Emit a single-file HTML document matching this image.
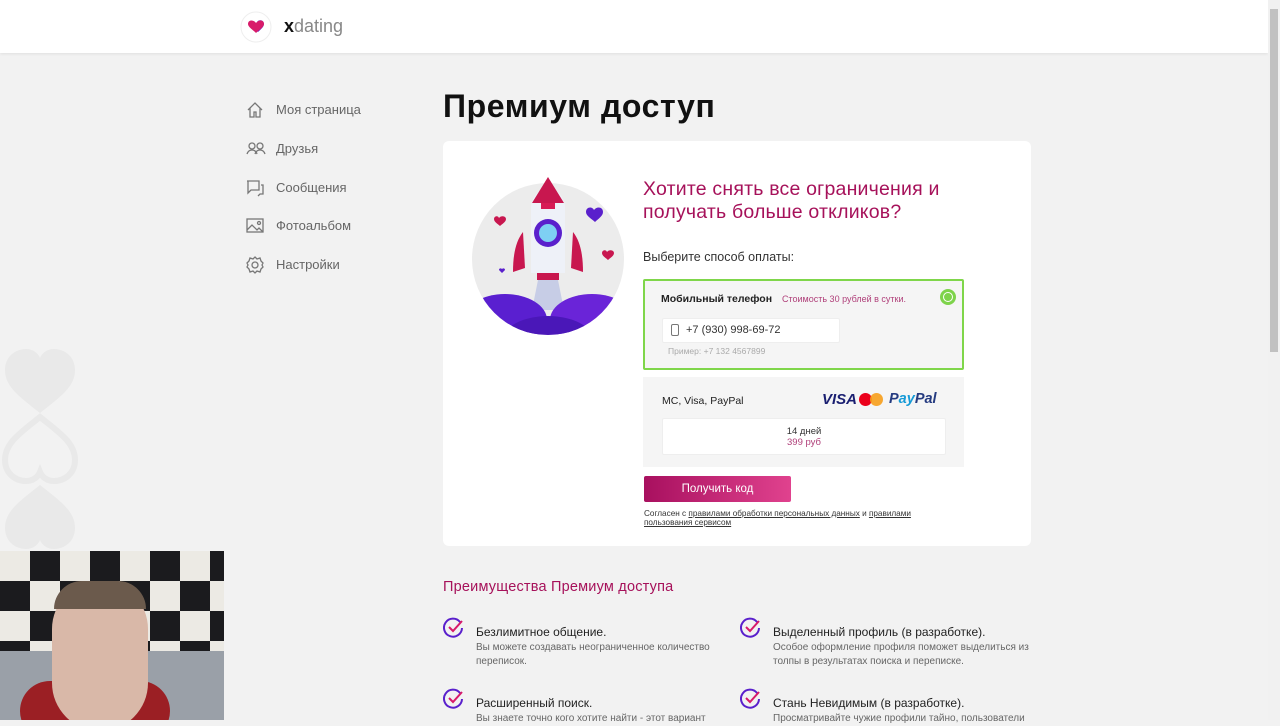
<!DOCTYPE html>
<html><head><meta charset="utf-8"><style>
*{margin:0;padding:0;box-sizing:border-box}
body{width:1280px;height:720px;overflow:hidden;background:#f2f2f2;font-family:"Liberation Sans","DejaVu Sans",sans-serif;position:relative;color:#222}
.abs{position:absolute}
.hdr{left:0;top:0;width:1268px;height:53px;background:#fff;box-shadow:0 1px 3px rgba(0,0,0,.08)}
.nav div{position:absolute;left:276px;font-size:13px;color:#666}
.nav svg{position:absolute;left:-30px;top:-1px}
h1{position:absolute;left:443px;top:88px;font-size:32px;font-weight:bold;color:#111;letter-spacing:0.6px}
.card{left:443px;top:141px;width:588px;height:405px;background:#fff;border-radius:6px}
.ttl{left:643px;top:178px;font-size:19.5px;line-height:23px;color:#a6115a;letter-spacing:0.2px}
.feat{position:absolute;width:270px}
.feat b{display:block;font-weight:normal;font-size:12px;color:#222}
.feat span{display:block;font-size:10px;color:#666;line-height:14px;margin-top:2px}
.feat svg{position:absolute;left:-33px;top:-8px}
</style></head><body>
<div class="abs hdr"></div>
<svg class="abs" style="left:240px;top:11px" width="34" height="32" viewBox="0 0 34 32"><circle cx="16" cy="16" r="15" fill="#fff" stroke="#eee"/><path d="M17 11c2-3 7-2 7 2 0 3-4 6-6 8l-3-3z" fill="#5a22d1"/><path d="M16 22c-3-3-8-6-8-9 0-4 5-5 8-1 3-4 8-3 8 1 0 3-5 6-8 9z" fill="#d81b6a"/></svg>
<div class="abs" style="left:284px;top:16px;font-size:18px;color:#888"><b style="color:#111">x</b>dating</div>

<div class="nav">
<div style="top:102px"><svg width="18" height="18" viewBox="0 0 18 18" fill="none" stroke="#777" stroke-width="1.3"><path d="M2 9L9 2l7 7M4 7v9h4v-5h2v5h4V7"/></svg>Моя страница</div>
<div style="top:141px"><svg width="20" height="18" viewBox="0 0 20 18" fill="none" stroke="#777" stroke-width="1.3"><circle cx="6" cy="6" r="3"/><circle cx="14" cy="6" r="3"/><path d="M1 14c1-3 3-4 5-4s4 1 5 4M9 14c1-3 3-4 5-4s4 1 5 4"/></svg>Друзья</div>
<div style="top:180px"><svg width="18" height="18" viewBox="0 0 18 18" fill="none" stroke="#777" stroke-width="1.3"><path d="M1 2h12v9H5l-3 3V2zM15 6h2v9h-3l-2 2"/></svg>Сообщения</div>
<div style="top:218px"><svg width="18" height="18" viewBox="0 0 18 18" fill="none" stroke="#777" stroke-width="1.3"><rect x="1" y="2" width="16" height="13"/><path d="M1 13l5-5 5 5 2-2 4 4"/><circle cx="13" cy="6" r="1.5"/></svg>Фотоальбом</div>
<div style="top:257px"><svg width="18" height="18" viewBox="0 0 18 18" fill="none" stroke="#777" stroke-width="1.3"><circle cx="9" cy="9" r="3"/><path d="M9 1l2 2 3-1 1 3 2 2-1 2 1 2-2 2-1 3-3-1-2 2-2-2-3 1-1-3-2-2 1-2-1-2 2-2 1-3 3 1z"/></svg>Настройки</div>
</div>

<h1>Премиум доступ</h1>
<div class="abs card"></div>

<svg class="abs" style="left:470px;top:172px" width="160" height="170" viewBox="470 172 160 170">
<defs><clipPath id="c"><circle cx="548" cy="259" r="76"/></clipPath></defs>
<circle cx="548" cy="259" r="76" fill="#ececec"/>
<g clip-path="url(#c)">
<path d="M538 280h20l6 30h-32z" fill="#c7cde6"/>
<ellipse cx="505" cy="320" rx="42" ry="26" fill="#5a1fd0"/>
<ellipse cx="592" cy="320" rx="42" ry="26" fill="#6a24d8"/>
<ellipse cx="548" cy="340" rx="45" ry="24" fill="#4a17b8"/>
</g>
<path d="M523 232c-8 10-10 25-10 40l12-4z" fill="#c8174f"/>
<path d="M573 232c8 10 10 25 10 40l-12-4z" fill="#c8174f"/>
<path d="M531 208c0-10 8-20 17-20s17 10 17 20v65h-34z" fill="#eef1f8"/>
<path d="M548 177l-16 26h32z" fill="#c8174f"/>
<rect x="541" y="203" width="14" height="6" fill="#d71b55"/>
<circle cx="548" cy="233" r="14" fill="#5a20cc"/><circle cx="548" cy="233" r="9" fill="#7ed0f3"/>
<rect x="537" y="273" width="22" height="7" fill="#c8174f"/>
<path d="M499 218c2-3 7-2 7 1 0 3-4 5-6 7-2-2-6-4-6-7 0-3 4-4 5-1z" fill="#c8174f"/>
<path d="M594 210c3-4 9-3 9 2 0 4-5 7-8 10-3-3-9-6-9-10 0-5 6-6 8-2z" fill="#5a20cc"/>
<path d="M607 252c2-3 7-2 7 1 0 3-4 5-6 7-2-2-6-4-6-7 0-3 4-4 5-1z" fill="#c8174f"/>
<path d="M502 269c1-1 3-1 3 1l-3 3-3-3c0-2 2-2 3-1z" fill="#5a20cc"/>
</svg>

<div class="abs ttl">Хотите снять все ограничения и<br>получать больше откликов?</div>
<div class="abs" style="left:643px;top:250px;font-size:12.5px;color:#333">Выберите способ оплаты:</div>

<div class="abs" style="left:643px;top:279px;width:321px;height:91px;background:#f5f5f5;border:2px solid #7fd64a;border-radius:2px"></div>
<div class="abs" style="left:661px;top:293px;font-size:10.5px;font-weight:bold;color:#222">Мобильный телефон</div>
<div class="abs" style="left:782px;top:294px;font-size:9px;color:#b0407a">Стоимость 30 рублей в сутки.</div>
<div class="abs" style="left:940px;top:289px;width:16px;height:16px;border-radius:50%;background:#7ed34b"><div style="position:absolute;left:3px;top:3px;width:10px;height:10px;border:1px solid #fff;border-radius:50%"></div></div>
<div class="abs" style="left:662px;top:318px;width:178px;height:25px;background:#fff;border:1px solid #eee;border-radius:2px"></div>
<div class="abs" style="left:671px;top:324px;width:8px;height:12px;border:1px solid #777;border-radius:2px"></div>
<div class="abs" style="left:686px;top:324px;font-size:11px;color:#333">+7 (930) 998-69-72</div>
<div class="abs" style="left:668px;top:346px;font-size:8.5px;color:#aaa">Пример: +7 132 4567899</div>

<div class="abs" style="left:643px;top:377px;width:321px;height:90px;background:#f5f5f5"></div>
<div class="abs" style="left:662px;top:395px;font-size:10.5px;color:#222">MC, Visa, PayPal</div>
<div class="abs" style="left:822px;top:391px;font-size:15px;font-weight:bold;font-style:italic;color:#1a1f71">VISA</div>
<div class="abs" style="left:859px;top:393px;width:13px;height:13px;border-radius:50%;background:#eb001b"></div>
<div class="abs" style="left:870px;top:393px;width:13px;height:13px;border-radius:50%;background:#f79e1b;opacity:.9"></div>
<div class="abs" style="left:889px;top:391px;font-size:14.5px;font-weight:bold;font-style:italic;color:#253b80">P<span style="color:#179bd7">ay</span>Pal</div>
<div class="abs" style="left:662px;top:418px;width:284px;height:37px;background:#fff;border:1px solid #eee;border-radius:2px;text-align:center;font-size:9.5px;line-height:11px;padding-top:7px;color:#333">14 дней<br><span style="color:#b0407a">399 руб</span></div>

<div class="abs" style="left:644px;top:476px;width:147px;height:26px;border-radius:2px;background:linear-gradient(90deg,#a8105f,#e0428e);color:#fff;font-size:11.5px;text-align:center;line-height:26px">Получить код</div>
<div class="abs" style="left:644px;top:509px;font-size:8.2px;line-height:9px;color:#333">Согласен с <u>правилами обработки персональных данных</u> и <u>правилами</u><br><u>пользования сервисом</u></div>

<div class="abs" style="left:443px;top:579px;font-size:14.5px;color:#a6115a;letter-spacing:0.2px">Преимущества Премиум доступа</div>
<svg width="0" height="0" style="position:absolute"><defs><g id="ck"><path d="M17 5A9 9 0 1 0 19 11" fill="none" stroke="#5a20cc" stroke-width="2"/><path d="M6 10l4 4 9-10" fill="none" stroke="#d81b6a" stroke-width="2"/></g></defs></svg>
<div class="feat" style="left:476px;top:625px"><svg width="22" height="22"><use href="#ck"/></svg><b>Безлимитное общение.</b><span>Вы можете создавать неограниченное количество переписок.</span></div>
<div class="feat" style="left:773px;top:625px"><svg width="22" height="22"><use href="#ck"/></svg><b>Выделенный профиль (в разработке).</b><span>Особое оформление профиля поможет выделиться из толпы в результатах поиска и переписке.</span></div>
<div class="feat" style="left:476px;top:696px"><svg width="22" height="22"><use href="#ck"/></svg><b>Расширенный поиск.</b><span>Вы знаете точно кого хотите найти - этот вариант</span></div>
<div class="feat" style="left:773px;top:696px"><svg width="22" height="22"><use href="#ck"/></svg><b>Стань Невидимым (в разработке).</b><span>Просматривайте чужие профили тайно, пользователи</span></div>

<svg class="abs" style="left:0;top:345px" width="80" height="205" viewBox="0 0 80 205"><g fill="#e9e9e9"><path d="M40 68C20 52 5 42 5 25 5 12 15 4 26 4c7 0 12 4 14 9 2-5 7-9 14-9 11 0 21 8 21 21 0 17-15 27-35 43z"/><path d="M40 72c20 16 35 26 35 43 0 13-10 21-21 21-7 0-12-4-14-9-2 5-7 9-14 9-11 0-21-8-21-21 0-17 15-27 35-43z" fill="none" stroke="#e9e9e9" stroke-width="6"/><path d="M40 140C20 156 5 166 5 183 5 196 15 204 26 204c7 0 12-4 14-9 2 5 7 9 14 9 11 0 21-8 21-21 0-17-15-27-35-43z"/></g></svg>

<div class="abs" style="left:0;top:551px;width:224px;height:169px;background:#e8e4dc;overflow:hidden">
<div style="position:absolute;left:0;top:0;width:224px;height:110px;background:repeating-conic-gradient(#1b1b1e 0 25%,#eceae4 0 50%) 0 0/60px 60px"></div>
<div style="position:absolute;left:0;top:100px;width:224px;height:69px;background:#9aa0a8"></div>
<div style="position:absolute;left:20px;top:130px;width:150px;height:60px;border-radius:40px;background:#9b1f24"></div>
<div style="position:absolute;left:52px;top:30px;width:96px;height:150px;border-radius:48px;background:#d9b8a8"></div>
<div style="position:absolute;left:54px;top:30px;width:92px;height:28px;border-radius:40px 40px 0 0;background:#6b5a4c"></div>
</div>

<div class="abs" style="left:1268px;top:0;width:12px;height:720px;background:#f1f1f1"></div>
<div class="abs" style="left:1270px;top:9px;width:8px;height:343px;background:#c1c1c1"></div>
</body></html>
